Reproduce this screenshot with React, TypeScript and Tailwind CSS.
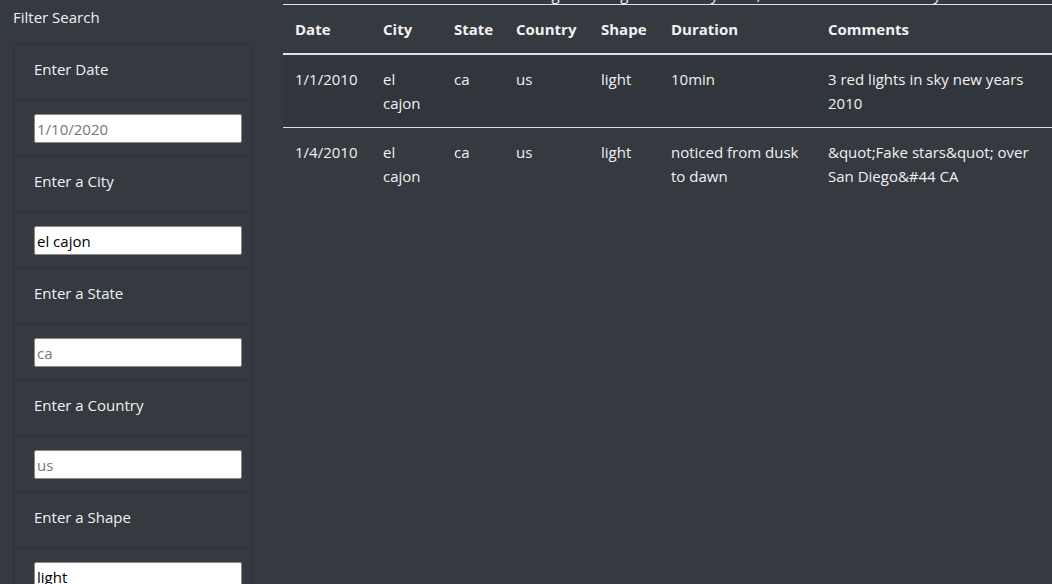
import React from 'react';

const filters = [
  { label: 'Enter Date', placeholder: '1/10/2020', value: '' },
  { label: 'Enter a City', placeholder: 'san diego', value: 'el cajon' },
  { label: 'Enter a State', placeholder: 'ca', value: '' },
  { label: 'Enter a Country', placeholder: 'us', value: '' },
  { label: 'Enter a Shape', placeholder: 'circle', value: 'light' },
];

const rows = [
  ['1/1/2010', 'el cajon', 'ca', 'us', 'light', '10min', '3 red lights in sky new years 2010'],
  ['1/4/2010', 'el cajon', 'ca', 'us', 'light', 'noticed from dusk to dawn', '&quot;Fake stars&quot; over San Diego&#44 CA'],
];

const cols = ['Date', 'City', 'State', 'Country', 'Shape', 'Duration', 'Comments'];
const widths = ['w-[88px]', 'w-[71px]', 'w-[62px]', 'w-[85px]', 'w-[70px]', 'w-[157px]', 'w-[236px]'];

export default function App() {
  return (
    <div
      className="h-[584px] w-[1052px] overflow-hidden bg-[#343a40] text-[16px] leading-6 text-[#f1f1f1]"
      style={{ fontFamily: '"Open Sans", "Noto Sans", sans-serif' }}
    >
      <div className="flex">
        <aside className="w-[283px] shrink-0 pl-[13px] pr-[30px]">
          <h2 className="pt-[5px] pb-[15px] text-[15px] leading-6 font-normal">Filter Search</h2>
          <ul className="border border-[#2c3136] rounded-[3px]">
            {filters.map((f) => (
              <React.Fragment key={f.label}>
                <li className="h-[56px] px-5 pt-[12px] border-b border-[#2c3136] text-[15px] leading-6">{f.label}</li>
                <li className="h-[56px] pl-5 pr-[10px] flex items-center border-b border-[#2c3136]">
                  <input
                    className="h-[29px] w-[208px] shrink-0 bg-white border border-[#8a8a8a] rounded-[2px] px-[2px] text-[15px] text-black placeholder:text-[#777]"
                    placeholder={f.placeholder}
                    defaultValue={f.value}
                  />
                </li>
              </React.Fragment>
            ))}
          </ul>
        </aside>
        <main className="flex-1 min-w-0">
          <div className="h-[4px] overflow-hidden flex items-end pl-[208px]">
            <p className="whitespace-nowrap text-[15px] leading-5">
              Searching in the big UFO data by state, shown below in the entry
            </p>
          </div>
          <table className="table-fixed border-collapse w-[769px] text-[15px]">
            <thead>
              <tr>
                {cols.map((c, i) => (
                  <th
                    key={c}
                    className={`${widths[i]} text-left font-bold px-3 py-3 border-t border-[#dee2e6] border-b-2 border-b-[#dee2e6]`}
                  >
                    {c}
                  </th>
                ))}
              </tr>
            </thead>
            <tbody>
              {rows.map((r, ri) => (
                <tr key={ri} className={ri === 0 ? 'bg-[#31363c]' : ''}>
                  {r.map((cell, ci) => (
                    <td key={ci} className="align-top px-3 py-3 border-t border-[#dee2e6]">
                      {cell}
                    </td>
                  ))}
                </tr>
              ))}
            </tbody>
          </table>
        </main>
      </div>
    </div>
  );
}
